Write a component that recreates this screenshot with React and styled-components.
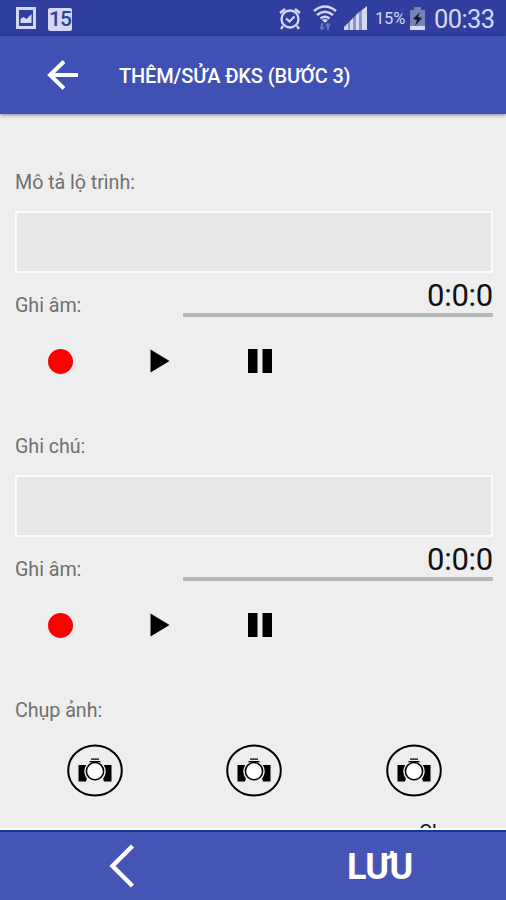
import React from "react";
import styled, { createGlobalStyle } from "styled-components";

const GlobalStyle = createGlobalStyle`
  * {
    box-sizing: border-box;
  }

  body {
    margin: 0;
    background: #eeeeee;
    font-family: Roboto, "Noto Sans", sans-serif;
  }
`;

const Screen = styled.div`
  display: flex;
  flex-direction: column;
  width: 506px;
  height: 900px;
  overflow: hidden;
  background: #eeeeee;
`;

const StatusBar = styled.header`
  display: flex;
  flex: none;
  align-items: center;
  justify-content: space-between;
  height: 36px;
  padding: 0 11px 0 16px;
  background: #303f9f;
  color: #d3d8f3;
`;

const StatusGroup = styled.div`
  display: flex;
  align-items: center;

  svg {
    display: block;
    flex: none;
  }
`;

const CalendarBadge = styled.span`
  width: 24px;
  height: 23px;
  margin: 2px 0 0 12px;
  border-radius: 2px;
  background: #d3d8f3;
  color: #303f9f;
  font-size: 21px;
  font-weight: 500;
  letter-spacing: -1px;
  line-height: 23px;
  text-align: center;
`;

const SignalGroup = styled(StatusGroup)`
  gap: 7px;

  svg:first-child {
    margin-right: 5px;
  }
`;

const BatteryLevel = styled.span`
  width: 31px;
  margin: 1px 4px 0 7px;
  font-size: 16.5px;
  letter-spacing: -0.2px;
  white-space: nowrap;
`;

const Clock = styled.span`
  width: 61px;
  margin: 2px 0 0 9px;
  font-size: 25.5px;
  letter-spacing: -0.6px;
  line-height: 36px;
  white-space: nowrap;
`;

const AppBar = styled.div`
  z-index: 1;
  display: flex;
  flex: none;
  align-items: center;
  height: 78px;
  padding-left: 47px;
  background: #3f51b5;
  box-shadow: 0 1px 4px rgba(0, 0, 0, 0.45);
  color: #ffffff;
`;

const IconButton = styled.button`
  display: flex;
  padding: 0;
  border: none;
  background: none;
  color: inherit;
  cursor: pointer;
`;

const Title = styled.h1`
  margin: 2px 0 0 41px;
  font-size: 20px;
  font-weight: 500;
  letter-spacing: -0.14px;
  white-space: nowrap;
`;

const Content = styled.main`
  flex: none;
  height: 714px;
  padding: 54px 13px 0 15px;
  overflow: hidden;
`;

const Section = styled.section`
  height: 264px;
`;

const Label = styled.label`
  display: block;
  height: 28px;
  color: #707070;
  font-size: 19.7px;
  letter-spacing: -0.05px;
  line-height: 29px;
  white-space: nowrap;
`;

const NoteInput = styled.textarea`
  display: block;
  width: 100%;
  height: 62px;
  margin-top: 15px;
  border: 2px solid #fbfbfb;
  outline: none;
  resize: none;
  background: #e8e8e6;
`;

const RecordRow = styled.div`
  display: flex;
  justify-content: space-between;
  height: 44px;

  ${Label} {
    margin-top: 18px;
  }
`;

const Timer = styled.output`
  width: 310px;
  height: 44px;
  border-bottom: 4px solid #b0b8ba;
  color: #111111;
  font-size: 31px;
  letter-spacing: -0.25px;
  line-height: 45px;
  text-align: right;
`;

const Controls = styled.div`
  display: flex;
  align-items: center;
  height: 26px;
  margin-top: 31px;
  padding-left: 33px;
`;

const RecordButton = styled(IconButton)`
  width: 25px;
  height: 25px;
  border-radius: 50%;
  background: #ff0000;
`;

const PlayButton = styled(IconButton)`
  margin-left: 77px;
`;

const PauseButton = styled(IconButton)`
  margin-left: 78px;
`;

const PhotoRow = styled.div`
  display: flex;
  gap: 103.5px;
  margin: 20px 0 0 51.5px;
`;

const NextLabel = styled.p`
  height: 24px;
  margin: 23px 0 0 404px;
  color: #111111;
  font-size: 20px;
  line-height: 24px;
`;

const BottomBar = styled.footer`
  display: flex;
  flex: none;
  align-items: center;
  height: 72px;
  padding: 2px 0 0 108px;
  border-top: 2px solid #ffffff;
  background: #4555b5;
  box-shadow: inset 0 2px 0 #1233a0;
  color: #ffffff;
`;

const SaveButton = styled(IconButton)`
  margin: 2px 0 0 211px;
  font-family: inherit;
  font-size: 36px;
  font-weight: 700;
  letter-spacing: -1.3px;
`;

const ImageIcon = () => (
  <svg width="20" height="22" viewBox="0 0 20 22">
    <path fill="currentColor" fillRule="evenodd" d="M0 0h20v22H0zM3 3v16h14V3z" />
    <path fill="currentColor" d="M4.500 16v-4l3-2 3 2 5-5v9z" />
  </svg>
);

const AlarmIcon = () => (
  <svg width="22" height="23" viewBox="0 0 22 23" fill="none" stroke="currentColor" strokeWidth="2.3">
    <circle cx="11" cy="12" r="8.5" />
    <path d="M1 6l5-4M21 6l-5-4M4 19l-2 3M18 19l2 3M7 11.5l3.5 3 5-5" />
  </svg>
);

const WifiIcon = () => (
  <svg width="24" height="26" viewBox="0 0 24 26" fill="none" stroke="currentColor" strokeWidth="2.4">
    <path d="M1 6Q12-3 23 6M4 10q8-6.5 16 0M7.5 13.5q4.500-3.500 9 0" />
    <path fill="currentColor" stroke="none" d="M9 15q3-2 6 0l-3 3z" />
    <path stroke="#6573bf" strokeWidth="2" d="M9 18v6m-2-2l2 2 2-2M15 25v-6m-2 2l2-2 2 2" />
  </svg>
);

const SignalIcon = () => (
  <svg width="24" height="24" viewBox="0 0 24 24" fill="currentColor">
    <path d="M0 24v-3l4-4v7z" />
    <path d="M6 15l3-3v12H6zM12 9l3-3v18h-3zM18 4l5-4v24h-5z" />
    <path opacity=".55" d="M4 17l2-2v9H4zM9 12l3-3v15H9zM15 6l3-2v20h-3z" />
  </svg>
);

const BatteryIcon = () => (
  <svg width="15" height="23" viewBox="0 0 15 23">
    <path fill="#7782b9" d="M4 0h7v3h4v20H0V3h4z" />
    <path fill="currentColor" d="M0 19h15v4H0z" />
    <path fill="#10172f" d="M10 5l-7 7 4 1-2 6 7-8-4-1z" />
  </svg>
);

const ArrowIcon = () => (
  <svg width="31" height="30" viewBox="0 0 31 30" fill="none" stroke="currentColor" strokeWidth="4">
    <path d="M17 1.500L3 15l14 13.500M3 15h28" />
  </svg>
);

const PlayIcon = () => (
  <svg width="20" height="24" viewBox="0 0 20 24">
    <path d="M.5.500L19.500 12 .5 23.500z" />
  </svg>
);

const PauseIcon = () => (
  <svg width="24" height="24" viewBox="0 0 24 24">
    <path d="M0 0h9.500v24H0zM14.500 0H24v24h-9.500z" />
  </svg>
);

const CameraIcon = () => (
  <svg width="56" height="53" viewBox="0 0 56 53">
    <ellipse cx="28" cy="26.500" rx="26.800" ry="25" fill="none" stroke="#000" strokeWidth="2" />
    <path d="M11.500 21h33v16.500h-33z" />
    <path fill="#eee" d="M21.500 20.500l2.500-5h8l2.500 5 .5 9 2 8.500H19l2-8.500z" />
    <circle cx="28" cy="27.200" r="10.700" fill="#eee" />
    <path stroke="#000" strokeWidth="1.300" d="M24 15.200h8M22.500 17.700h11" />
    <circle cx="28" cy="27.200" r="8.600" fill="#fff" stroke="#000" strokeWidth="1.500" />
  </svg>
);

const ChevronIcon = () => (
  <svg width="28" height="44" viewBox="0 0 28 44" fill="none" stroke="currentColor" strokeWidth="4.500">
    <path d="M24.500 2L4.500 22l20 20" />
  </svg>
);

const NoteSection = ({ id, label }) => (
  <Section>
    <Label htmlFor={id}>{label}</Label>
    <NoteInput id={id} />
    <RecordRow>
      <Label as="span">Ghi âm:</Label>
      <Timer>0:0:0</Timer>
    </RecordRow>
    <Controls>
      <RecordButton />
      <PlayButton>
        <PlayIcon />
      </PlayButton>
      <PauseButton>
        <PauseIcon />
      </PauseButton>
    </Controls>
  </Section>
);

const App = () => {
  return (
    <Screen>
      <GlobalStyle />
      <StatusBar>
        <StatusGroup>
          <ImageIcon />
          <CalendarBadge>15</CalendarBadge>
        </StatusGroup>
        <StatusGroup>
          <SignalGroup>
            <AlarmIcon />
            <WifiIcon />
            <SignalIcon />
          </SignalGroup>
          <BatteryLevel>15%</BatteryLevel>
          <BatteryIcon />
          <Clock>00:33</Clock>
        </StatusGroup>
      </StatusBar>
      <AppBar>
        <IconButton>
          <ArrowIcon />
        </IconButton>
        <Title>THÊM/SỬA ĐKS (BƯỚC 3)</Title>
      </AppBar>
      <Content>
        <NoteSection id="route" label="Mô tả lộ trình:" />
        <NoteSection id="note" label="Ghi chú:" />
        <Label as="span">Chụp ảnh:</Label>
        <PhotoRow>
          {[1, 2, 3].map((photo) => (
            <IconButton key={photo}>
              <CameraIcon />
            </IconButton>
          ))}
        </PhotoRow>
        <NextLabel>Ch</NextLabel>
      </Content>
      <BottomBar>
        <IconButton>
          <ChevronIcon />
        </IconButton>
        <SaveButton>LƯU</SaveButton>
      </BottomBar>
    </Screen>
  );
};

export default App;
